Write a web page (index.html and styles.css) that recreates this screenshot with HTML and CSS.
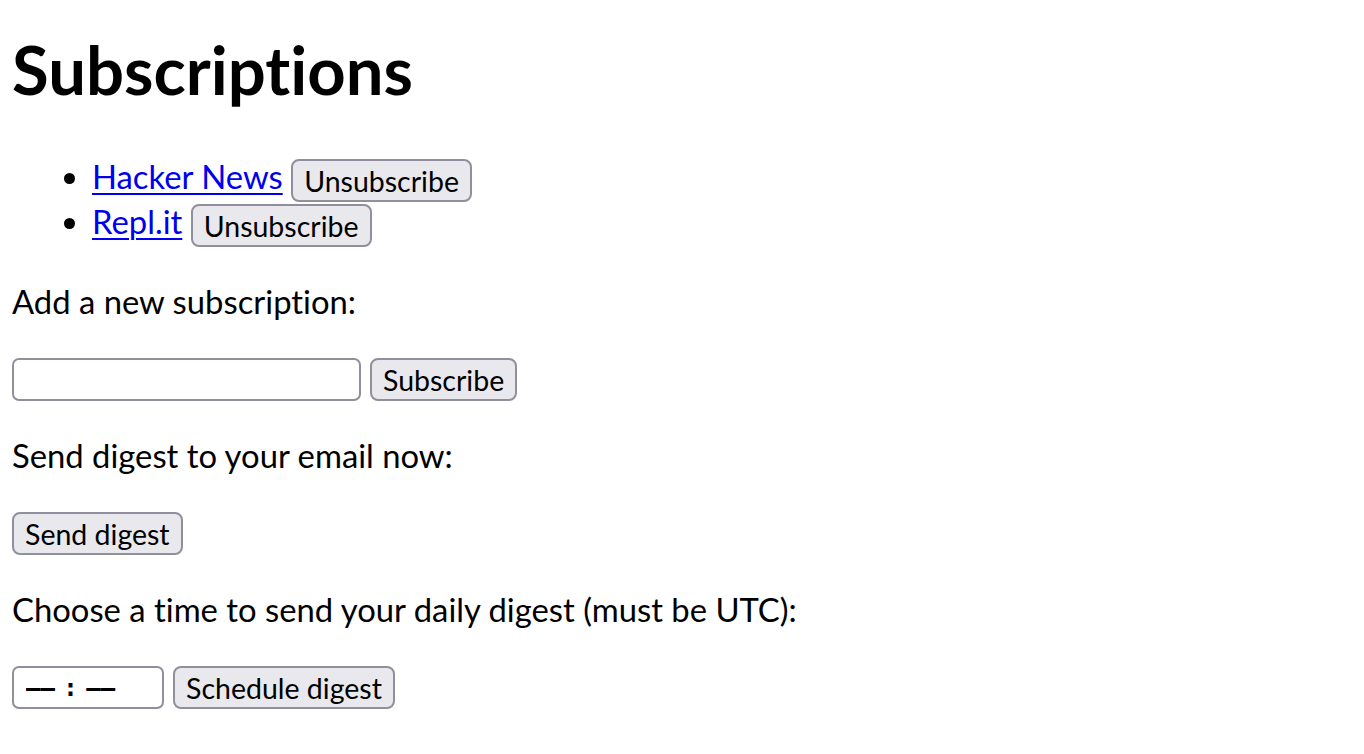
FILE: index.html
```html
<!DOCTYPE html>
<html lang="en">
<head>
<meta charset="utf-8">
<title>Subscriptions</title>
<link rel="stylesheet" href="styles.css">
</head>
<body>
<h1 class="title">Subscriptions</h1>
<ul class="subs">
  <li class="sub"><a class="sub-link" href="#">Hacker News</a> <button class="btn" type="button">Unsubscribe</button></li>
  <li class="sub"><a class="sub-link" href="#">Repl.it</a> <button class="btn" type="button">Unsubscribe</button></li>
</ul>
<p class="label">Add a new subscription:</p>
<div class="row">
  <input class="field field-url" type="text">
  <button class="btn" type="button">Subscribe</button>
</div>
<p class="label">Send digest to your email now:</p>
<div class="row">
  <button class="btn" type="button">Send digest</button>
</div>
<p class="label">Choose a time to send your daily digest (must be UTC):</p>
<div class="row">
  <input class="field field-time" type="text" placeholder="–– : ––">
  <button class="btn" type="button">Schedule digest</button>
</div>
</body>
</html>
```
FILE: styles.css
```css
html, body {
  background: #ffffff;
}
body {
  margin: 0;
  padding: 0 12px;
  font-family: "Lato", "Open Sans", sans-serif;
  font-size: 32.8px;
  line-height: 44px;
  color: #000000;
  font-variant-ligatures: none;
}
.title {
  margin: 24px 0 40px;
  font-size: 67px;
  line-height: 90px;
  font-weight: 700;
}
.subs {
  margin: 0;
  padding: 0 0 3px 80px;
  list-style: disc;
}
.sub {
  height: 45px;
  line-height: 45px;
}
.sub-link {
  color: #0000ee;
  text-decoration: underline;
  text-decoration-thickness: 2px;
  text-underline-offset: 4px;
}
.btn {
  box-sizing: border-box;
  font-family: inherit;
  font-size: 28.5px;
  line-height: 36px;
  height: 43px;
  padding: 1px 11px;
  border: 2px solid #8f8f9d;
  border-radius: 8px;
  background: #e9e9ed;
  color: #000000;
  vertical-align: middle;
  font-variant-ligatures: none;
}
.label {
  margin: 33px 0 0;
  line-height: 44px;
}
.row {
  display: flex;
  align-items: center;
  gap: 9px;
  margin-top: 34px;
}
.field {
  box-sizing: border-box;
  height: 43px;
  border: 2px solid #8f8f9d;
  border-radius: 7px;
  background: #ffffff;
  font-family: inherit;
  font-size: 27px;
  padding: 2px 8px;
}
.field-url {
  width: 349px;
}
.field-time {
  width: 152px;
  padding-left: 12px;
  font-family: "DejaVu Sans Mono", monospace;
  font-size: 24px;
  font-weight: 700;
  word-spacing: -6px;
}
.field-time::placeholder {
  color: #000000;
  opacity: 1;
  word-spacing: -6px;
}
```
